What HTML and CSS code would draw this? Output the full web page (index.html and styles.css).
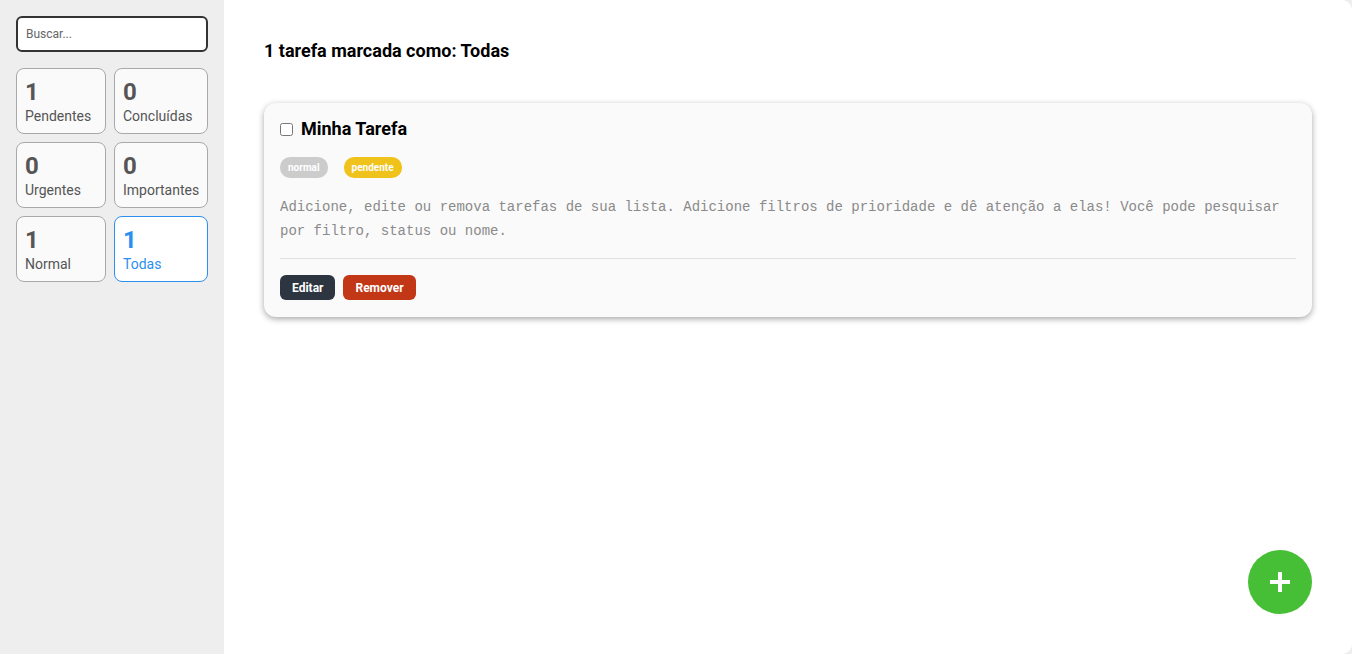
FILE: index.html
```html
<!DOCTYPE html>
<html lang="pt-BR">
<head>
<meta charset="utf-8">
<title>Tarefas</title>
<link rel="stylesheet" href="styles.css">
</head>
<body>
<div class="app">
  <aside class="sidebar">
    <input class="search" type="text" placeholder="Buscar...">
    <div class="filters">
      <div class="filter"><strong>1</strong><span>Pendentes</span></div>
      <div class="filter"><strong>0</strong><span>Concluídas</span></div>
      <div class="filter"><strong>0</strong><span>Urgentes</span></div>
      <div class="filter"><strong>0</strong><span>Importantes</span></div>
      <div class="filter"><strong>1</strong><span>Normal</span></div>
      <div class="filter active"><strong>1</strong><span>Todas</span></div>
    </div>
  </aside>
  <main class="main">
    <h2 class="heading">1 tarefa marcada como: Todas</h2>
    <ul class="list">
      <li class="task">
        <label class="task-title"><input type="checkbox" class="check"><span>Minha Tarefa</span></label>
        <div class="tags">
          <span class="tag tag-normal">normal</span>
          <span class="tag tag-pending">pendente</span>
        </div>
        <p class="desc">Adicione, edite ou remova tarefas de sua lista. Adicione filtros de prioridade e dê atenção a elas! Você pode pesquisar por filtro, status ou nome.</p>
        <div class="actions">
          <button class="btn btn-edit">Editar</button>
          <button class="btn btn-remove">Remover</button>
        </div>
      </li>
    </ul>
    <button class="fab" aria-label="Adicionar">
      <svg width="22" height="22" viewBox="0 0 22 22"><path d="M11 1v20M1 11h20" stroke="#fff" stroke-width="4" fill="none"/></svg>
    </button>
  </main>
</div>
</body>
</html>
```
FILE: styles.css
```css
* { box-sizing: border-box; }
html, body { margin: 0; height: 100%; }
body {
  background: #eeeeee;
  font-family: Roboto, "Liberation Sans", sans-serif;
  color: #000;
}
.app {
  display: flex;
  height: 654px;
}
.sidebar {
  width: 224px;
  flex: none;
  background: #eeeeee;
  padding: 16px;
  display: flex;
  flex-direction: column;
  gap: 16px;
}
.search {
  width: 192px;
  height: 36px;
  border: 2px solid #333;
  border-radius: 6px;
  padding: 0 8px;
  font-family: Roboto, "Liberation Sans", sans-serif;
  font-size: 12px;
  color: #333;
  background: #fff;
  outline: none;
}
.search::placeholder { color: #666; }
.filters {
  display: grid;
  grid-template-columns: 90px 94px;
  grid-auto-rows: 66px;
  gap: 8px;
}
.filter {
  border: 1px solid #a8a8a8;
  border-radius: 8px;
  background: #fafafa;
  padding: 10px 8px 0;
  display: flex;
  flex-direction: column;
  color: #555;
}
.filter strong {
  font-size: 24px;
  line-height: 26px;
  font-weight: 700;
  color: #555;
}
.filter span {
  font-size: 14px;
  line-height: 20px;
  margin-top: 1px;
}
.filter.active {
  border-color: #2b8ff0;
  background: #fff;
  color: #2b8ff0;
}
.filter.active strong { color: #2b8ff0; }
.main {
  flex: 1;
  position: relative;
  background: #fff;
  border-radius: 0 10px 10px 0;
  padding: 40px;
}
.heading {
  margin: 0;
  font-size: 18px;
  line-height: 21px;
  font-weight: 700;
}
.list {
  list-style: none;
  margin: 42px 0 0;
  padding: 0;
}
.task {
  background: #fafafa;
  border-radius: 12px;
  box-shadow: 0 2px 6px rgba(0,0,0,0.35);
  padding: 16px 16px 17px;
}
.task-title {
  display: flex;
  align-items: center;
  gap: 8px;
  font-size: 18px;
  font-weight: 700;
  line-height: 20px;
}
.check {
  margin: 0;
  width: 13px;
  height: 13px;
}
.tags {
  display: flex;
  gap: 16px;
  margin-top: 18px;
}
.tag {
  display: inline-block;
  height: 21px;
  line-height: 21px;
  border-radius: 10px;
  padding: 0 8px;
  font-size: 10px;
  font-weight: 700;
  color: #fff;
}
.tag-normal { background: #cccccc; }
.tag-pending { background: #f0c21c; }
.desc {
  margin: 17px 0 0;
  font-family: "Liberation Mono", "DejaVu Sans Mono", monospace;
  font-size: 14px;
  line-height: 24px;
  color: #8a8a8a;
  padding-bottom: 15px;
  border-bottom: 1px solid #e0e0e0;
}
.actions {
  display: flex;
  gap: 8px;
  margin-top: 16px;
}
.btn {
  height: 25px;
  border: none;
  border-radius: 6px;
  padding: 0 12px;
  font-family: Roboto, "Liberation Sans", sans-serif;
  font-size: 12px;
  font-weight: 700;
  color: #fff;
}
.btn-edit { background: #2d3540; }
.btn-remove { background: #c23716; }
.fab {
  position: absolute;
  right: 40px;
  bottom: 40px;
  width: 64px;
  height: 64px;
  border-radius: 50%;
  border: none;
  background: #46be35;
  display: flex;
  align-items: center;
  justify-content: center;
  padding: 0;
}
```
